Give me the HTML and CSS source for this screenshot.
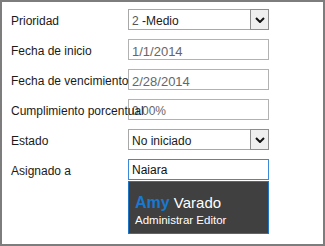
FILE: index.html
```html
<!DOCTYPE html>
<html lang="es">
<head>
    <meta charset="UTF-8">
    <title>Tarea</title>
    <link rel="stylesheet" href="styles.css">
</head>
<body>
    <div class="frame">
        <div class="form">
            <div class="label">Prioridad</div>
            <div class="field select">
                <span class="value"><span class="num">2</span> -Medio</span>
                <span class="arrow">
                    <svg width="10" height="6" viewBox="0 0 10 6"><polyline points="1,1 5,5 9,1" fill="none" stroke="#111" stroke-width="2"/></svg>
                </span>
            </div>

            <div class="label">Fecha de inicio</div>
            <div class="field"><span class="value muted date">1/1/2014</span></div>

            <div class="label">Fecha de vencimiento</div>
            <div class="field"><span class="value muted date">2/28/2014</span></div>

            <div class="label">Cumplimiento porcentual</div>
            <div class="field"><span class="value muted">0.00%</span></div>

            <div class="label">Estado</div>
            <div class="field select">
                <span class="value">No iniciado</span>
                <span class="arrow">
                    <svg width="10" height="6" viewBox="0 0 10 6"><polyline points="1,1 5,5 9,1" fill="none" stroke="#111" stroke-width="2"/></svg>
                </span>
            </div>

            <div class="label">Asignado a</div>
            <div class="picker">
                <div class="field focus"><span class="value">Naiara</span></div>
                <div class="suggest">
                    <div class="person"><b>Amy</b> Varado</div>
                    <div class="role">Administrar Editor</div>
                </div>
            </div>
        </div>
    </div>
</body>
</html>
```

FILE: styles.css
```css
body {
    margin: 0;
    font-family: "Liberation Sans", Arial, sans-serif;
    font-size: 12px;
    color: #1a1a1a;
}

.frame {
    box-sizing: border-box;
    width: 325px;
    height: 246px;
    border: 2px solid #7d7d7d;
    padding: 7px 0 0 9px;
}

.form {
    display: grid;
    grid-template-columns: 117px 141px;
    row-gap: 9px;
    align-items: start;
}

/* long labels run over the field, as in the original form */
.label {
    position: relative;
    z-index: 1;
    white-space: nowrap;
    line-height: 15px;
    padding-top: 5px;
}

.field {
    box-sizing: border-box;
    height: 21px;
    border: 1px solid #b2b2b2;
    background: #fff;
    display: flex;
    align-items: stretch;
}

.field .value {
    flex: 1;
    padding: 4px 0 0 3px;
    line-height: 15px;
    white-space: nowrap;
}

.muted {
    color: #666;
}

.date {
    font-size: 13px;
}

.num {
    color: #555;
}

.select {
    border-color: #a8a8a8;
}

.arrow {
    box-sizing: border-box;
    width: 19px;
    margin: -1px -1px -1px 0;
    border: 1px solid #8e8e8e;
    background: #efefef;
    display: flex;
    align-items: center;
    justify-content: center;
}

.focus {
    border-color: #3b8ad9;
    color: #111;
}

.focus .value {
    padding-top: 3px;
}

.suggest {
    box-sizing: border-box;
    height: 53px;
    margin-top: 1px;
    border: 1px solid #1f74c4;
    background: #404040;
    color: #fff;
    padding: 12px 0 0 6px;
}

.person {
    font-size: 15px;
    line-height: 18px;
}

.person b {
    font-size: 16px;
    color: #1a78d0;
}

.role {
    font-size: 11.5px;
    line-height: 14px;
    margin-top: 1px;
}
```
